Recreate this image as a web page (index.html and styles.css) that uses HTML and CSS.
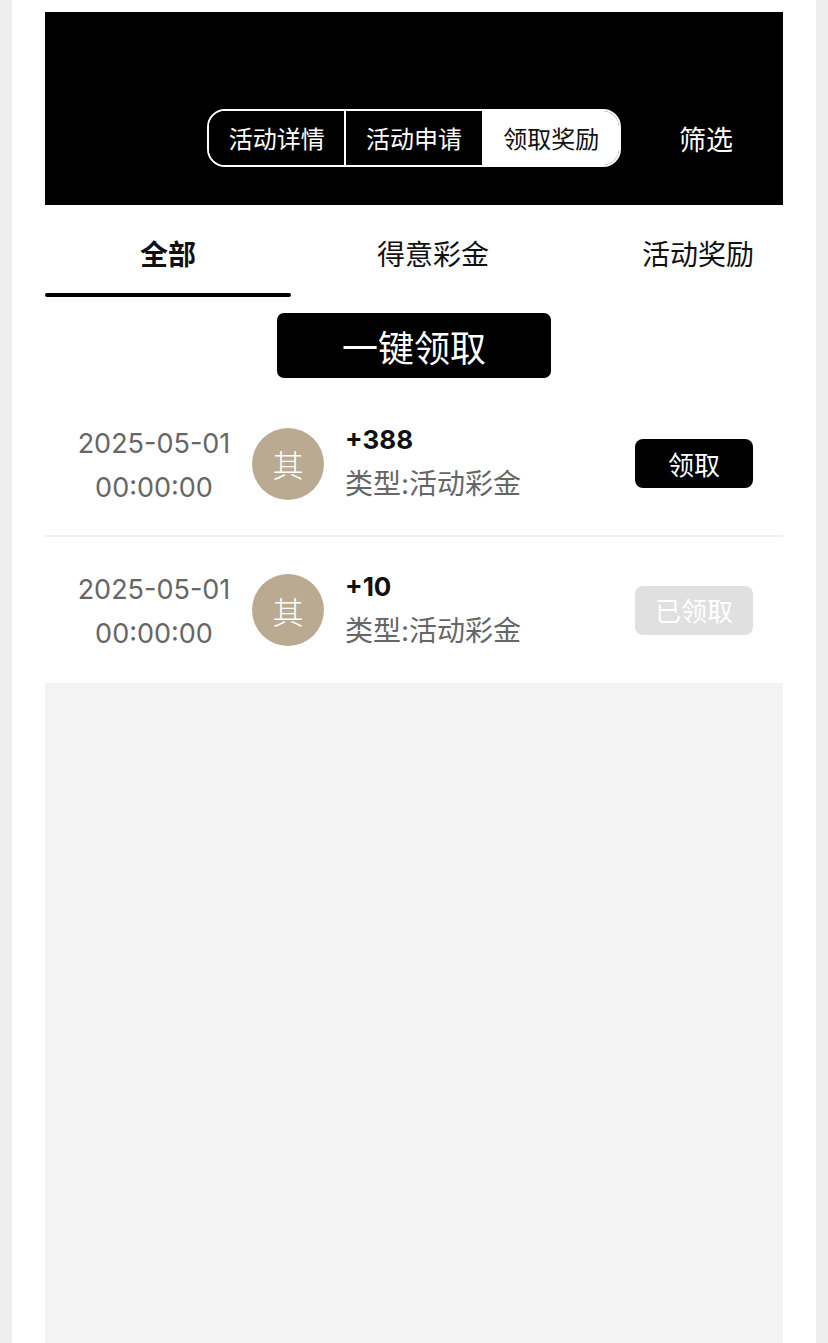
FILE: index.html
```html
<!DOCTYPE html>
<html lang="zh-CN">
<head>
<meta charset="utf-8">
<title>领取奖励</title>
<link rel="stylesheet" href="styles.css">
</head>
<body>
<div class="page">
  <div class="content">
    <header class="header">
      <div class="segmented">
        <div class="seg">活动详情</div>
        <div class="seg">活动申请</div>
        <div class="seg seg-active">领取奖励</div>
      </div>
      <div class="filter">筛选</div>
    </header>

    <nav class="tabs">
      <div class="tab tab-1 tab-active">全部</div>
      <div class="tab tab-2">得意彩金</div>
      <div class="tab tab-3">活动奖励</div>
    </nav>

    <div class="claim-all-wrap">
      <button class="claim-all">一键领取</button>
    </div>

    <div class="list">
      <div class="row">
        <div class="date">2025-05-01<br>00:00:00</div>
        <div class="avatar">其</div>
        <div class="info">
          <div class="amount">+388</div>
          <div class="type">类型:活动彩金</div>
        </div>
        <button class="btn btn-claim">领取</button>
      </div>
      <div class="row">
        <div class="date">2025-05-01<br>00:00:00</div>
        <div class="avatar">其</div>
        <div class="info">
          <div class="amount">+10</div>
          <div class="type">类型:活动彩金</div>
        </div>
        <button class="btn btn-done">已领取</button>
      </div>
    </div>

    <div class="empty"></div>
  </div>
</div>
</body>
</html>
```

FILE: styles.css
```css
* { box-sizing: border-box; }

html, body {
  margin: 0;
  padding: 0;
  background: #eeeeee;
  font-family: "Noto Sans CJK SC", "Noto Sans", sans-serif;
}

.page {
  width: 804px;
  margin: 0 12px;
  background: #ffffff;
  min-height: 1343px;
  padding: 12px 33px 0;
}

.content {
  display: flex;
  flex-direction: column;
  min-height: 1331px;
}

.header {
  height: 193px;
  background: #000000;
  display: flex;
  align-items: flex-start;
  padding: 97px 0 0 162px;
}

.segmented {
  display: flex;
  width: 414px;
  height: 58px;
  border: 2px solid #ffffff;
  border-radius: 18px;
  overflow: hidden;
}

.seg {
  flex: 1;
  display: flex;
  align-items: center;
  justify-content: center;
  color: #ffffff;
  font-size: 24px;
  line-height: 1;
  background: #000000;
}

.seg + .seg {
  border-left: 2px solid #ffffff;
}

.seg-active {
  background: #ffffff;
  color: #111111;
}

.filter {
  margin-left: 58px;
  height: 58px;
  width: 54px;
  display: flex;
  align-items: center;
  justify-content: center;
  color: #ffffff;
  font-size: 27px;
}

.tabs {
  display: flex;
  height: 92px;
  overflow: hidden;
}

.tab {
  flex: none;
  display: flex;
  align-items: center;
  justify-content: center;
  padding-top: 4px;
  font-size: 28px;
  color: #111111;
  position: relative;
}

.tab-1 { width: 246px; }
.tab-2 { width: 284px; }
.tab-3 { width: 246px; }

.tab-active {
  font-weight: 700;
}

.tab-active::after {
  content: "";
  position: absolute;
  left: 0;
  right: 0;
  bottom: 0;
  height: 4px;
  border-radius: 2px;
  background: #000000;
}

.claim-all-wrap {
  display: flex;
  justify-content: center;
  padding: 16px 0 14px;
}

.claim-all {
  width: 274px;
  height: 65px;
  border: none;
  border-radius: 7px;
  background: #000000;
  color: #ffffff;
  font-family: inherit;
  font-size: 36px;
  line-height: 1;
  padding: 0;
}

.list {
  display: flex;
  flex-direction: column;
  font-family: Inter, "Noto Sans CJK SC", sans-serif;
}

.row {
  height: 145px;
  display: flex;
  align-items: center;
  border-bottom: 2px solid #f1f1f1;
  padding: 0 30px 0 0;
}

.row:last-child {
  border-bottom: none;
  height: 146px;
}

.date {
  width: 164px;
  margin-left: 27px;
  padding-top: 4px;
  text-align: center;
  color: #666666;
  font-size: 27px;
  line-height: 44px;
  white-space: nowrap;
}

.avatar {
  width: 72px;
  height: 72px;
  border-radius: 50%;
  background: #b9aa91;
  color: #ffffff;
  margin-left: 16px;
  display: flex;
  align-items: center;
  justify-content: center;
  font-family: "Noto Sans CJK SC", sans-serif;
  font-weight: 300;
  font-size: 31px;
  line-height: 1;
  flex: none;
}

.info {
  flex: 1;
  margin-left: 21px;
  display: flex;
  flex-direction: column;
  line-height: 44px;
  margin-top: -3px;
}

.amount {
  font-size: 26px;
  font-weight: 700;
  color: #111111;
}

.type {
  font-size: 28px;
  color: #666666;
}

.btn {
  width: 118px;
  height: 49px;
  border: none;
  border-radius: 8px;
  font-family: "Noto Sans CJK SC", sans-serif;
  font-size: 26px;
  line-height: 1;
  padding: 0;
  color: #ffffff;
}

.btn-claim { background: #000000; }
.btn-done { background: #e0e0e0; }

.empty {
  flex: 1;
  background: #f3f3f3;
}
```
